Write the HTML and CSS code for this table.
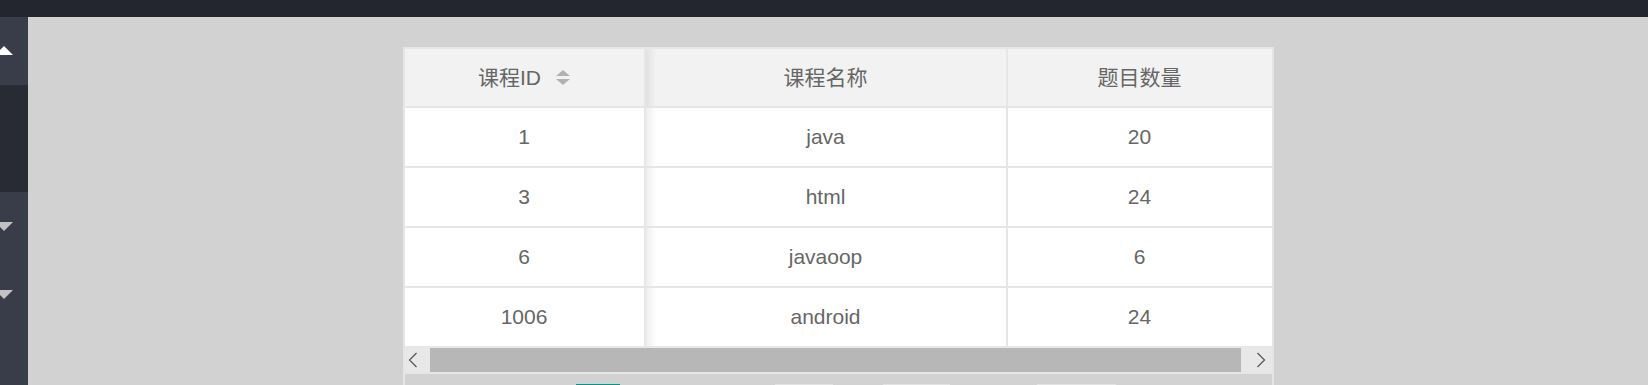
FILE: index.html
```html
<!DOCTYPE html>
<html lang="zh-CN">
<head>
<meta charset="utf-8">
<title>课程列表</title>
<link rel="stylesheet" href="styles.css">
</head>
<body>
<div class="topbar"></div>
<div class="main">
  <aside class="side">
    <div class="nav-item"><span class="tri tri-up"></span></div>
    <div class="nav-child"></div>
    <div class="nav-item"><span class="tri tri-down"></span></div>
    <div class="nav-item"><span class="tri tri-down"></span></div>
  </aside>
  <section class="content">
    <div class="table-box">
      <div class="grid">
        <div class="cell head c1"><span>课程ID</span><span class="sort"><i class="s-up"></i><i class="s-down"></i></span></div>
        <div class="cell head c2">课程名称</div>
        <div class="cell head c3">题目数量</div>

        <div class="cell c1">1</div>
        <div class="cell c2">java</div>
        <div class="cell c3">20</div>

        <div class="cell c1">3</div>
        <div class="cell c2">html</div>
        <div class="cell c3">24</div>

        <div class="cell c1">6</div>
        <div class="cell c2">javaoop</div>
        <div class="cell c3">6</div>

        <div class="cell c1">1006</div>
        <div class="cell c2">android</div>
        <div class="cell c3">24</div>
      </div>
      <div class="hscroll">
        <div class="sb-btn sb-left"><svg width="10" height="16" viewBox="0 0 10 16"><polyline points="8.5,1 1.5,8 8.5,15" fill="none" stroke="#555" stroke-width="1.2"/></svg></div>
        <div class="sb-thumb"></div>
        <div class="sb-btn sb-right"><svg width="10" height="16" viewBox="0 0 10 16"><polyline points="1.5,1 8.5,8 1.5,15" fill="none" stroke="#555" stroke-width="1.2"/></svg></div>
      </div>
      <div class="pager">
        <span class="pg pg-curr"></span>
        <span class="pg pg-limit"></span>
        <span class="pg pg-input"></span>
        <span class="pg pg-btn"></span>
      </div>
    </div>
  </section>
</div>
</body>
</html>
```

FILE: styles.css
```css
html, body {
  margin: 0;
  padding: 0;
}
body {
  width: 1648px;
  height: 385px;
  overflow: hidden;
  background: #d2d2d2;
  font-family: "Liberation Sans", Arial, "Noto Sans CJK SC", sans-serif;
  color: #666;
}
.topbar {
  height: 17px;
  background: #23262e;
}
.main {
  display: flex;
  height: 368px;
  overflow: hidden;
}
.side {
  width: 28px;
  flex: none;
  background: #393d49;
  display: flex;
  flex-direction: column;
  overflow: hidden;
}
.nav-item {
  height: 68px;
  display: flex;
  align-items: center;
  flex: none;
}
.nav-child {
  height: 107px;
  flex: none;
  background: #282b33;
}
.tri {
  width: 0;
  height: 0;
  margin-left: -5px;
  border-left: 9px solid transparent;
  border-right: 9px solid transparent;
}
.tri-up {
  border-bottom: 9px solid #fff;
  margin-top: -1px;
}
.tri-down {
  border-top: 9px solid #c2c2c2;
  margin-top: 1px;
}
.content {
  flex: 1;
  padding-top: 30px;
}
.table-box {
  width: 867px;
  margin: 0 auto;
  border: 2px solid #e6e6e6;
  border-bottom: none;
}
.grid {
  display: grid;
  grid-template-columns: 239px 360px 264px;
  grid-template-rows: 57px repeat(4, 58px);
  gap: 2px;
  padding-bottom: 1px;
  background: #e6e6e6;
}
.cell {
  display: flex;
  align-items: center;
  justify-content: center;
  background: #fff;
  font-size: 21px;
  line-height: 30px;
  white-space: nowrap;
}
.cell.head {
  background: #f2f2f2;
}
.cell.c2 {
  background-image: linear-gradient(to right, rgba(0,0,0,0.07), rgba(0,0,0,0) 10px);
}
.sort {
  display: flex;
  flex-direction: column;
  gap: 3px;
  margin-left: 15px;
}
.sort i {
  display: block;
  width: 0;
  height: 0;
  border-left: 7px solid transparent;
  border-right: 7px solid transparent;
}
.sort .s-up {
  border-bottom: 6px solid #b2b2b2;
}
.sort .s-down {
  border-top: 6px solid #b2b2b2;
}
.hscroll {
  height: 25px;
  display: flex;
  background: #e8e8e8;
  border-bottom: 2px solid #e6e6e6;
}
.sb-btn {
  display: flex;
  align-items: center;
}
.sb-left {
  width: 25px;
  padding-left: 3px;
  box-sizing: border-box;
}
.sb-right {
  width: 31px;
  justify-content: flex-end;
  padding-right: 6px;
  box-sizing: border-box;
}
.sb-thumb {
  flex: 1;
  margin-top: 1px;
  background: #b7b7b7;
}
.pager {
  display: flex;
  align-items: flex-start;
  padding-top: 10px;
  height: 40px;
}
.pg {
  display: block;
  height: 42px;
  box-sizing: border-box;
  background: #fff;
  border: 1px solid #e2e2e2;
}
.pg-curr {
  margin-left: 171px;
  width: 44px;
  background: #009688;
  border-color: #009688;
}
.pg-limit {
  margin-left: 155px;
  width: 58px;
}
.pg-input {
  margin-left: 50px;
  width: 67px;
}
.pg-btn {
  margin-left: 87px;
  width: 79px;
}
```
